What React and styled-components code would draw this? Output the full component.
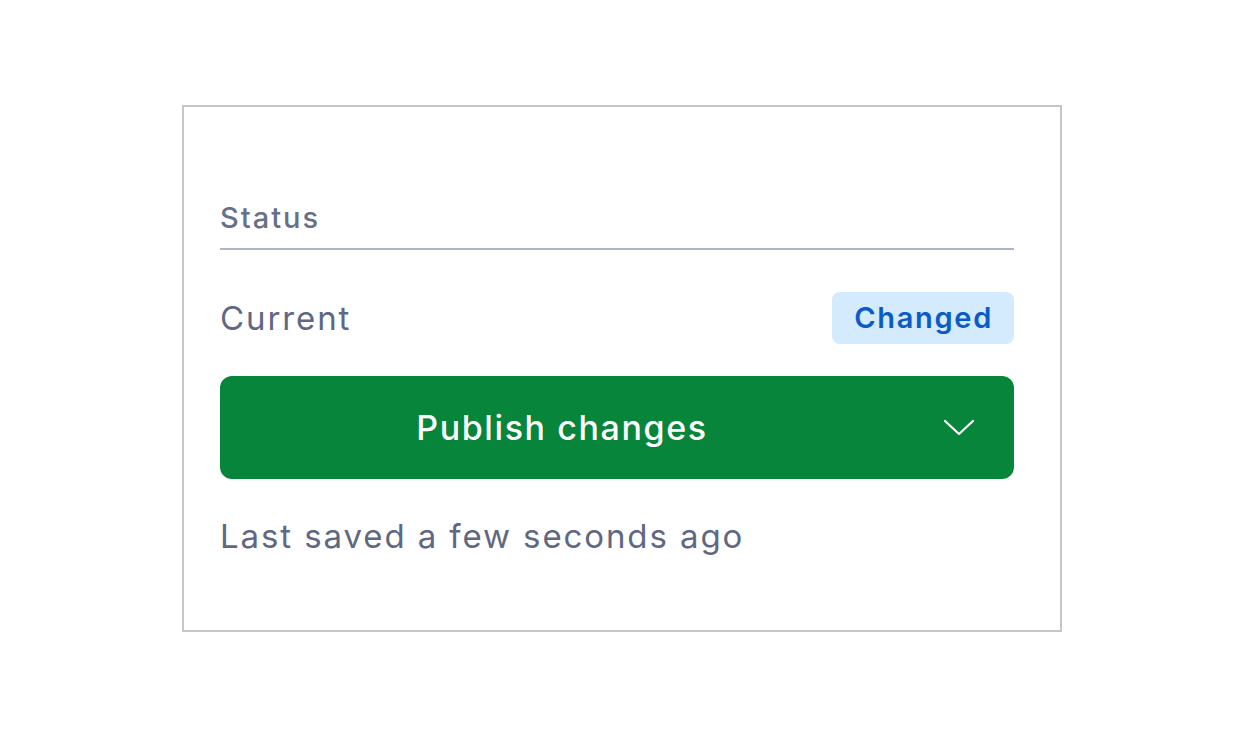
import React from "react";
import styled, { createGlobalStyle } from "styled-components";

const Global = createGlobalStyle`
  html, body { margin: 0; padding: 0; background: #ffffff; }
  body { font-family: Inter, "Noto Sans", sans-serif; }
`;

const Page = styled.div`
  width: 1242px;
  height: 748px;
  box-sizing: border-box;
  padding: 105px 0 0 182px;
`;

const Panel = styled.section`
  width: 880px;
  height: 527px;
  box-sizing: border-box;
  border: 2px solid #c6c6c6;
  padding: 94px 46px 0 36px;
  display: flex;
  flex-direction: column;
`;

const Heading = styled.div`
  font-size: 29px;
  font-weight: 500;
  color: #667089;
  letter-spacing: 2px;
  line-height: 34px;
  padding-bottom: 13px;
  border-bottom: 2px solid #a9b7c8;
`;

const Row = styled.div`
  display: flex;
  align-items: center;
  justify-content: space-between;
  margin-top: 42px;
`;

const Label = styled.span`
  font-size: 33px;
  color: #5f6883;
  letter-spacing: 1.9px;
  line-height: 52px;
`;

const Badge = styled.span`
  background: #d4eafd;
  color: #0b5bc6;
  font-size: 29px;
  font-weight: 600;
  letter-spacing: 1.7px;
  line-height: 52px;
  padding: 0 21px 0 22px;
  border-radius: 8px;
`;

const PublishButton = styled.button`
  margin-top: 32px;
  height: 103px;
  border: none;
  border-radius: 12px;
  background: #07853a;
  color: #ffffff;
  display: flex;
  align-items: center;
  padding: 0;
  font-family: inherit;
  cursor: pointer;
`;

const ButtonLabel = styled.span`
  flex: 1;
  text-align: center;
  font-size: 34px;
  font-weight: 500;
  letter-spacing: 1.6px;
`;

const Chevron = styled.span`
  width: 110px;
  display: flex;
  justify-content: center;
  align-items: center;
`;

const Footnote = styled.div`
  margin-top: 35px;
  font-size: 33px;
  color: #5f6883;
  letter-spacing: 1.9px;
  line-height: 44px;
`;

export default function App() {
  return (
    <>
      <Global />
      <Page>
        <Panel>
          <Heading>Status</Heading>
          <Row>
            <Label>Current</Label>
            <Badge>Changed</Badge>
          </Row>
          <PublishButton>
            <ButtonLabel>Publish changes</ButtonLabel>
            <Chevron>
              <svg width="32" height="18" viewBox="0 0 32 18" fill="none">
                <path d="M2 2 L16 15 L30 2" stroke="#ffffff" strokeWidth="2.2" strokeLinecap="round" strokeLinejoin="round" />
              </svg>
            </Chevron>
          </PublishButton>
          <Footnote>Last saved a few seconds ago</Footnote>
        </Panel>
      </Page>
    </>
  );
}
